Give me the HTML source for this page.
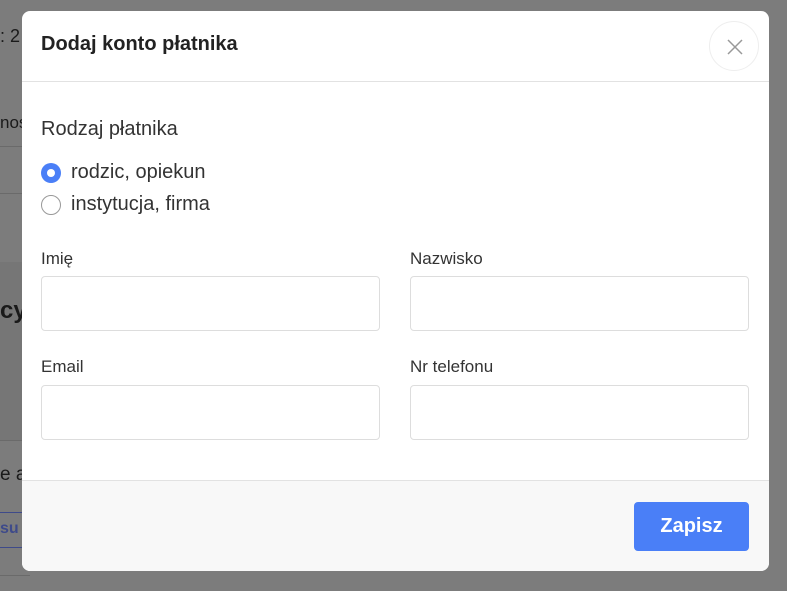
<!DOCTYPE html>
<html><head><meta charset="utf-8"><style>
*{box-sizing:border-box;margin:0;padding:0}
body{width:787px;height:591px;overflow:hidden;background:#7c7c7c;font-family:"Liberation Sans",Arial,sans-serif;position:relative;color:#222}
.bg{position:absolute;color:#1a1a1a;font-size:18px}
.ln{position:absolute;left:0;width:30px;height:1px;background:#6a6a6a}
.modal{position:absolute;left:22px;top:11px;width:747px;height:560px;background:#fff;border-radius:8px;overflow:hidden}
.hd{height:71px;border-bottom:1px solid #e2e2e2;position:relative}
.hd h1{position:absolute;left:19px;top:22px;font-size:20px;font-weight:bold;color:#222}
.x{position:absolute;left:687px;top:10px;width:50px;height:50px;border:1px solid #eee;border-radius:50%}
.lbl{position:absolute;font-size:17px;color:#333}
.in{position:absolute;width:339px;height:55px;border:1px solid #ddd;border-radius:4px}
.radio{position:absolute;left:19px;width:20px;height:20px;border-radius:50%}
.ft{position:absolute;left:0;top:469px;width:747px;height:91px;background:#f8f8f8;border-top:1px solid #e2e2e2}
.btn{position:absolute;left:612px;top:21px;width:115px;height:49px;background:#4a7ff7;border-radius:4px;color:#fff;font-size:20px;font-weight:bold;text-align:center;line-height:49px}
</style></head><body>
<div class="bg" style="left:0;top:26px;">: 2</div>
<div class="bg" style="left:0;top:113px;font-size:17px">nos</div>
<div class="ln" style="top:146px"></div>
<div class="ln" style="top:193px"></div>
<div style="position:absolute;left:0;top:262px;width:30px;height:178px;background:#767676"></div>
<div class="bg" style="left:0;top:297px;font-size:24px;font-weight:bold">cy</div>
<div class="ln" style="top:440px"></div>
<div class="bg" style="left:0;top:464px;font-size:19px">e a</div>
<div style="position:absolute;left:-5px;top:512px;width:30px;height:36px;border:1px solid #3e4a8a;border-left:none"></div>
<div class="bg" style="left:0;top:520px;font-size:16px;color:#3e4a8a;font-weight:bold">su</div>
<div class="ln" style="top:575px"></div>
<div class="modal">
 <div class="hd"><h1>Dodaj konto płatnika</h1>
  <div class="x"><svg width="50" height="50" viewBox="0 0 50 50"><path d="M18 18L32 32M32 18L18 32" stroke="#999" stroke-width="1.5"/></svg></div></div>
 <div class="lbl" style="left:19px;top:107px;font-size:20px">Rodzaj płatnika</div>
 <div class="radio" style="top:152px;background:#4a7ff7"><div style="position:absolute;left:6px;top:6px;width:8px;height:8px;border-radius:50%;background:#fff"></div></div>
 <div class="lbl" style="left:49px;top:150px;font-size:20px">rodzic, opiekun</div>
 <div class="radio" style="top:184px;border:1px solid #999"></div>
 <div class="lbl" style="left:49px;top:182px;font-size:20px">instytucja, firma</div>
 <div class="lbl" style="left:19px;top:238px">Imię</div>
 <div class="lbl" style="left:388px;top:238px">Nazwisko</div>
 <div class="in" style="left:19px;top:265px"></div>
 <div class="in" style="left:388px;top:265px"></div>
 <div class="lbl" style="left:19px;top:346px">Email</div>
 <div class="lbl" style="left:388px;top:346px">Nr telefonu</div>
 <div class="in" style="left:19px;top:374px"></div>
 <div class="in" style="left:388px;top:374px"></div>
 <div class="ft"><div class="btn">Zapisz</div></div>
</div>
</body></html>
